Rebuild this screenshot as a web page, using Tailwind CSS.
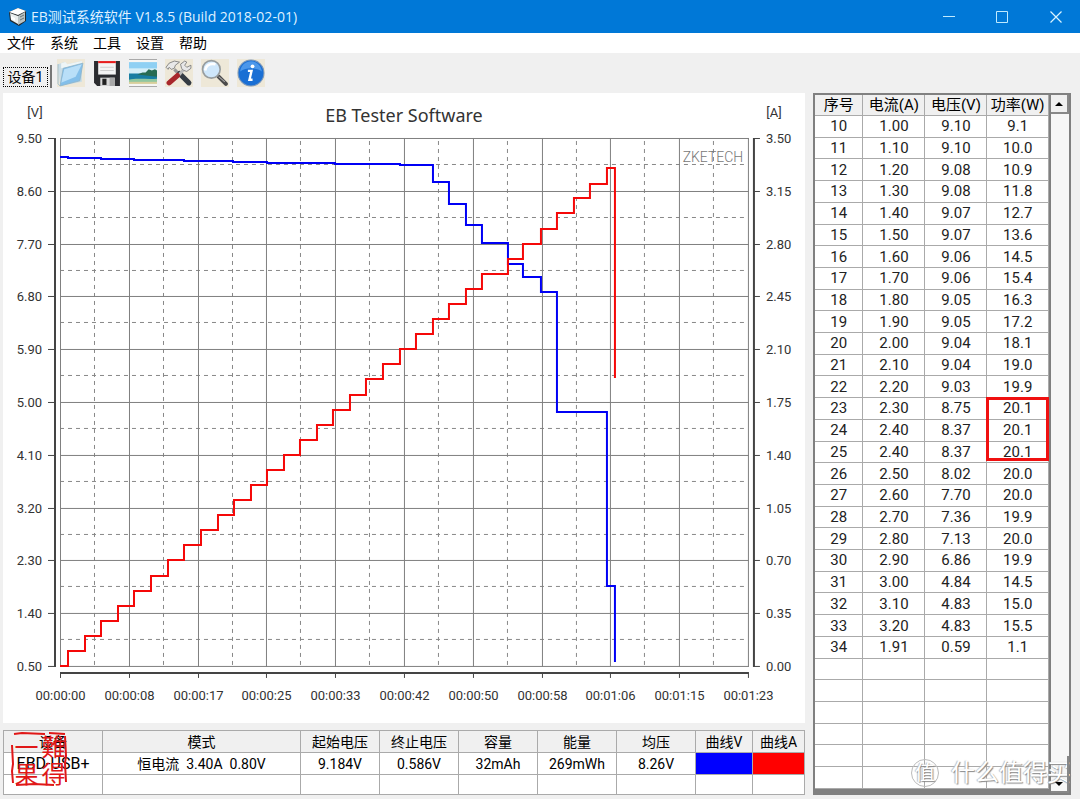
<!DOCTYPE html>
<html lang="zh-CN">
<head>
<meta charset="utf-8">
<title>EB测试系统软件</title>
<script src="https://cdn.jsdelivr.net/npm/@tailwindcss/browser@4"></script>
</head>
<body class="flex min-h-screen flex-col bg-[#f0f0f0] font-[Roboto,'Noto_Sans_CJK_SC',sans-serif] text-sm text-[#222]">
<header class="flex h-[33px] items-center bg-[#0078d7] pl-2 text-[#dff0ff]">
  <svg class="h-5 w-5" viewBox="0 0 20 20"><path d="M1 5 10 1l8 3v10l-7 5-9-5z" fill="#20272b"/><path d="m1 5 9-4 8 3-8 4z" fill="#fff"/><path d="m2 6 8 3v8l-7-4z" fill="#e9eeee"/><path d="m10 9 7-4v9l-7 4z" fill="#b9c3c4"/><path d="m3 9 4 2v3l-4-2z" fill="#fff"/><path d="m12 10 4-2M12 13l4-2" stroke="#69757a"/></svg>
  <h1 class="ml-[3px] grow text-sm font-[Open_Sans,'Noto_Sans_CJK_SC',sans-serif]">EB测试系统软件 V1.8.5 (Build 2018-02-01)</h1>
  <button aria-label="最小化" class="flex h-full w-[54px] items-center justify-center"><svg class="h-3 w-3" viewBox="0 0 12 12"><path d="M0 5.500h12" stroke="#bfeaff"/></svg></button>
  <button aria-label="最大化" class="flex h-full w-[52px] items-center justify-center"><svg class="h-3 w-3" viewBox="0 0 12 12"><path d="M.5.5h11v11H.5z" fill="none" stroke="#bfeaff"/></svg></button>
  <button aria-label="关闭" class="mr-[-4px] flex h-full w-14 items-center justify-center"><svg class="h-3 w-3" viewBox="0 0 12 12"><path d="m.5.5 11 11m0-11-11 11" stroke="#d9f4ff" stroke-width="1.200"/></svg></button>
</header>
<nav class="flex h-5 items-center gap-[15px] bg-white pl-[7px] text-sm leading-5 text-black">
  <button>文件</button><button>系统</button><button>工具</button><button>设置</button><button>帮助</button>
</nav>
<div class="flex h-10 items-start pl-[3px] pt-1">
  <button class="mt-2 h-[23px] w-[49px] border-r-2 border-[#777] pr-0.5 text-sm text-black"><span class="block h-5 border border-dotted border-black leading-[18px]">设备1</span></button>
  <div class="ml-[5px] flex gap-2 pt-0.5">
    <button aria-label="打开" class="h-7 w-7 bg-[#eee8d8]"><svg viewBox="0 0 27 27"><path d="M1 5 7 3l3 2 14-3v20L3 26z" fill="#c9dde6"/><path d="m4 4 4-1 2 2 14-3v3L4 9z" fill="#eef5f6"/><path d="m6 9 19-5-3 17L3 26z" fill="#83bfea"/><path d="m7 10 17-5-6 12-14 6z" fill="#b9dff8"/><path d="M1 5v19l2 2 3-17 19-5-3 17-19 5" fill="none" stroke="#8fb4ca" stroke-width=".8"/></svg></button>
    <button aria-label="保存" class="h-7 w-7"><svg viewBox="0 0 27 27"><path d="M1 2h25v24H4l-3-3z" fill="#2b2c30"/><path d="M5 2h17v13H5z" fill="#f4f4f4"/><path d="M5 2h17v2H5z" fill="#e81d1d"/><path d="M7 8h13M7 11h13" stroke="#cfcfcf"/><path d="M7 18h14v8H7z" fill="#d9d9d9"/><path d="M9 19h4v6H9z" fill="#222"/><path d="M16 18h5v8h-5z" fill="#a8a8a8"/></svg></button>
    <button aria-label="图片" class="h-7 w-7"><svg viewBox="0 0 27 27"><path d="M0 0h27v27H0z" fill="#f6f6f4"/><path d="M0 .5h27M0 26.500h27" stroke="#aaa"/><path d="M0 3h27v11H0z" fill="#8fd0f3"/><path d="M0 9h27v5H0z" fill="#d5eef7"/><path d="M0 14h27v7H0z" fill="#187da2"/><path d="m8 15 5-2 3 0 3-3 3 1 3-1 2 1v6z" fill="#286c52"/><path d="M0 20c7-2 18 0 27-1v4H0z" fill="#8fc7a0"/><path d="M0 22h27v2H0z" fill="#d8cf9b"/></svg></button>
    <button aria-label="工具" class="h-7 w-7 bg-[#eee8d8]"><svg viewBox="0 0 27 27"><path d="m9 10 5 5" stroke="#999" stroke-width="3"/><path d="m14 14 9 9" stroke="#353c43" stroke-width="5" stroke-linecap="round"/><path d="m19 9-6 7" stroke="#bbb" stroke-width="3"/><path d="m12 16-8 7" stroke="#a8272b" stroke-width="5" stroke-linecap="round"/><path d="m1 8 3-4 5-2 5 1-4 3-1 3-3 1-2-2-1 2zM16 9l-1-4 4-3 2 1-2 3 2 2 4-2v3l-4 3-3-1z" fill="#e8e8e8" stroke="#777" stroke-width=".8"/></svg></button>
    <button aria-label="查找" class="h-7 w-7 bg-[#eee8d8]"><svg viewBox="0 0 27 27"><path d="m17 17 7 7" stroke="#4b4b4b" stroke-width="4" stroke-linecap="round"/><path d="m17 17 6 5" stroke="#aaa"/><circle cx="10" cy="10" r="8.500" fill="#cfe7fb" stroke="#989d9f" stroke-width="1.600"/><path d="M4 11c1-5 5-7 10-6" stroke="#fff" stroke-width="2.500" fill="none"/></svg></button>
    <button aria-label="信息" class="h-7 w-7 bg-[#eee8d8]"><svg viewBox="0 0 27 27"><circle cx="13.500" cy="13.500" r="12.500" fill="#1a6fd4" stroke="#7c98bb"/><path d="M3 12c2-13 19-13 21 0-6-4-15-4-21 0z" fill="#4c97ea"/><circle cx="15" cy="7" r="1.800" fill="#fff"/><path d="M10.500 11.500h3.500L12 20h3" stroke="#fff" stroke-width="2.300" fill="none"/></svg></button>
  </div>
</div>
<main class="flex grow items-stretch gap-2 pb-1 pl-[3px] pr-[9px]">
  <div class="flex min-w-0 grow flex-col justify-between">
    <section class="bg-white">
      <svg id="chart" class="block w-full font-[Roboto,sans-serif] text-[13px]" viewBox="3 93 802 630" role="img" aria-label="EB Tester Software">
        <g id="dashes" fill="none" stroke="#888" stroke-dasharray="4 4"></g>
        <g id="solids" fill="none" stroke="#808080"></g>
        <g id="axes" fill="none" stroke="#444"></g>
        <g id="labels" fill="#333"></g>
        <text x="404" y="122" text-anchor="middle" class="text-lg font-[Noto_Sans,sans-serif]" fill="#333">EB Tester Software</text>
        <text x="35" y="117" text-anchor="middle" fill="#333">[V]</text>
        <text x="774" y="117" text-anchor="middle" fill="#333">[A]</text>
        <text x="713" y="162" text-anchor="middle" class="text-sm font-light" fill="#777">ZKETECH</text>
        <path fill="none" stroke="#0000f5" stroke-width="2" d="M60 157H68V158H101V159H134V160H184V161H233V162H267V163H335V164H400V165H433V182H449V204H466V225H482V243H508V264H523V277H541V292H557V412H607V586H615V662"/>
        <path fill="none" stroke="#f50808" stroke-width="2" d="M60 666H68V651H85V636H101V621H118V606H134V591H151V576H168V560H184V545H201V530H218V515H234V500H251V485H267V470H284V455H300V440H317V425H333V410H350V395H366V379H383V364H400V349H416V334H433V319H449V304H466V289H482V274H508V259H523V244H541V229H557V213H574V198H590V184H607V168H615V378"/>
      </svg>
    </section>
    <section class="relative">
      <table class="w-full table-fixed border-collapse border border-[#777] bg-white text-center text-black">
        <colgroup><col class="w-[99px]"><col class="w-[198px]"><col class="w-[79px]"><col class="w-[79px]"><col class="w-[79px]"><col class="w-[79px]"><col class="w-[79px]"><col class="w-[57px]"><col></colgroup>
        <thead><tr class="h-[22px] bg-[#f0f0f0] leading-5 *:border *:border-[#aaa] *:p-0 *:pt-px *:font-normal *:whitespace-nowrap"><th>设备</th><th>模式</th><th>起始电压</th><th>终止电压</th><th>容量</th><th>能量</th><th>均压</th><th>曲线V</th><th>曲线A</th></tr></thead>
        <tbody>
          <tr class="h-[22px] leading-5 *:border *:border-[#aaa] *:p-0 *:whitespace-nowrap"><td class="text-base leading-5">EBD-USB+</td><td>恒电流&nbsp; 3.40A&nbsp; 0.80V</td><td>9.184V</td><td>0.586V</td><td>32mAh</td><td>269mWh</td><td>8.26V</td><td class="bg-[#00f]"></td><td class="bg-[#f00]"></td></tr>
          <tr class="h-5 *:border *:border-[#aaa]"><td></td><td></td><td></td><td></td><td></td><td></td><td></td><td></td><td></td></tr>
        </tbody>
      </table>
      <div class="absolute left-2 top-0.5 h-[54px] w-[56px] text-[#e01818]">
        <svg class="absolute inset-0" viewBox="0 0 56 54" fill="none" stroke="currentColor" stroke-width="2"><path d="m3 2 8-1 23 1m4-1 16 1M1 13l1 19-1 7 1 12M54 4l1 20-1 7 1 19M5 53l18-1 20 1"/></svg>
        <div class="grid h-full grid-cols-2 place-items-center pl-0.5 font-[Noto_Sans_CJK_TC,sans-serif] text-2xl leading-6"><span>一</span><span>難</span><span>果</span><span>得</span></div>
      </div>
    </section>
  </div>
  <aside class="relative flex w-[258px] shrink-0 border-2 border-[#808080] bg-white">
    <div class="flex grow border-b-4 border-[#808080]">
      <table class="h-full grow table-fixed border-collapse text-center text-[15px] text-[#222]">
        <colgroup><col class="w-12"><col class="w-[62px]"><col class="w-[62px]"><col></colgroup>
        <thead><tr class="bg-[#f0f0f0] leading-5 text-black *:border-b *:border-r *:border-[#aaa] *:p-0 *:font-normal *:whitespace-nowrap"><th>序号</th><th>电流(A)</th><th>电压(V)</th><th>功率(W)</th></tr></thead>
        <tbody id="rows"></tbody>
      </table>
    </div>
    <div class="flex w-5 flex-col justify-between border-l-2 border-[#808080] bg-[#f7f7f7]">
      <button aria-label="向上滚动" class="flex h-[19px] items-center justify-center border-b-2 border-r-2 border-[#888] bg-[#f0f0f0]"><svg class="h-1.5 w-2" viewBox="0 0 8 6"><path d="m0 5 4-4 4 4z"/></svg></button>
      <button aria-label="向下滚动" class="z-10 flex h-[37px] items-end justify-center border-b-2 border-r-2 border-[#888] pb-1"><svg class="h-1.5 w-2" viewBox="0 0 8 6"><path d="m0 1 4 4 4-4z"/></svg></button>
    </div>
    <div class="absolute left-[171px] top-[302px] h-[64px] w-[63px] border-[3px] border-[#f01010]"></div>
    <div class="absolute -right-0.5 bottom-1 flex items-center gap-3 whitespace-nowrap text-2xl leading-8 text-white [text-shadow:1px_1px_1px_#888,-1px_0_1px_#bbb]">
      <span class="flex h-7 w-7 items-center justify-center rounded-full border border-[#bbb] text-xl">值</span><span>什么值得买</span>
    </div>
  </aside>
</main>
<script>
const ns = 'http://www.w3.org/2000/svg';
const path = (group, d, width = 1) => {
  const p = document.createElementNS(ns, 'path');
  p.setAttribute('d', d);
  p.setAttribute('stroke-width', width);
  document.getElementById(group).append(p);
};
const label = (x, y, anchor, value) => {
  const t = document.createElementNS(ns, 'text');
  t.setAttribute('x', x);
  t.setAttribute('y', y);
  t.setAttribute('text-anchor', anchor);
  t.textContent = value;
  document.getElementById('labels').append(t);
};
const times = ['00:00:00','00:00:08','00:00:17','00:00:25','00:00:33','00:00:42','00:00:50','00:00:58','00:01:06','00:01:15','00:01:23'];
path('axes', 'M55 138V667M754 138V667M60 673H749', 2);
for (let i = 0; i <= 10; i++) {
  const x = Math.round(60 + i * 68.8) + 0.5;
  const y = Math.round(138 + i * 52.8) + 0.5;
  path('solids', `M${x} 138V667M60 ${y}H749`);
  path('axes', `M48 ${y}H54M754 ${y}H760M${x} 673V678`);
  label(42, y + 5, 'end', (9.5 - i * 0.9).toFixed(2));
  label(766, y + 5, 'start', (3.5 - i * 0.35).toFixed(2));
  label(x, 700, 'middle', times[i]);
  if (i < 10) {
    path('dashes', `M${Math.round(94 + i * 68.8) + 0.5} 141V666`);
    path('dashes', `M60 ${Math.round(164 + i * 52.8) + 0.5}H748`);
  }
}
const records = `10 1.00 9.10 9.1
11 1.10 9.10 10.0
12 1.20 9.08 10.9
13 1.30 9.08 11.8
14 1.40 9.07 12.7
15 1.50 9.07 13.6
16 1.60 9.06 14.5
17 1.70 9.06 15.4
18 1.80 9.05 16.3
19 1.90 9.05 17.2
20 2.00 9.04 18.1
21 2.10 9.04 19.0
22 2.20 9.03 19.9
23 2.30 8.75 20.1
24 2.40 8.37 20.1
25 2.40 8.37 20.1
26 2.50 8.02 20.0
27 2.60 7.70 20.0
28 2.70 7.36 19.9
29 2.80 7.13 20.0
30 2.90 6.86 19.9
31 3.00 4.84 14.5
32 3.10 4.83 15.0
33 3.20 4.83 15.5
34 1.91 0.59 1.1`.split('\n').map(line => line.split(' '));
while (records.length < 31) records.push(['', '', '', '']);
const body = document.getElementById('rows');
for (const record of records) {
  const row = body.insertRow();
  row.className = 'leading-5 *:h-[21px] *:border-b *:border-r *:border-[#aaa] *:p-0';
  for (const value of record) row.insertCell().textContent = value;
}
</script>
</body>
</html>
